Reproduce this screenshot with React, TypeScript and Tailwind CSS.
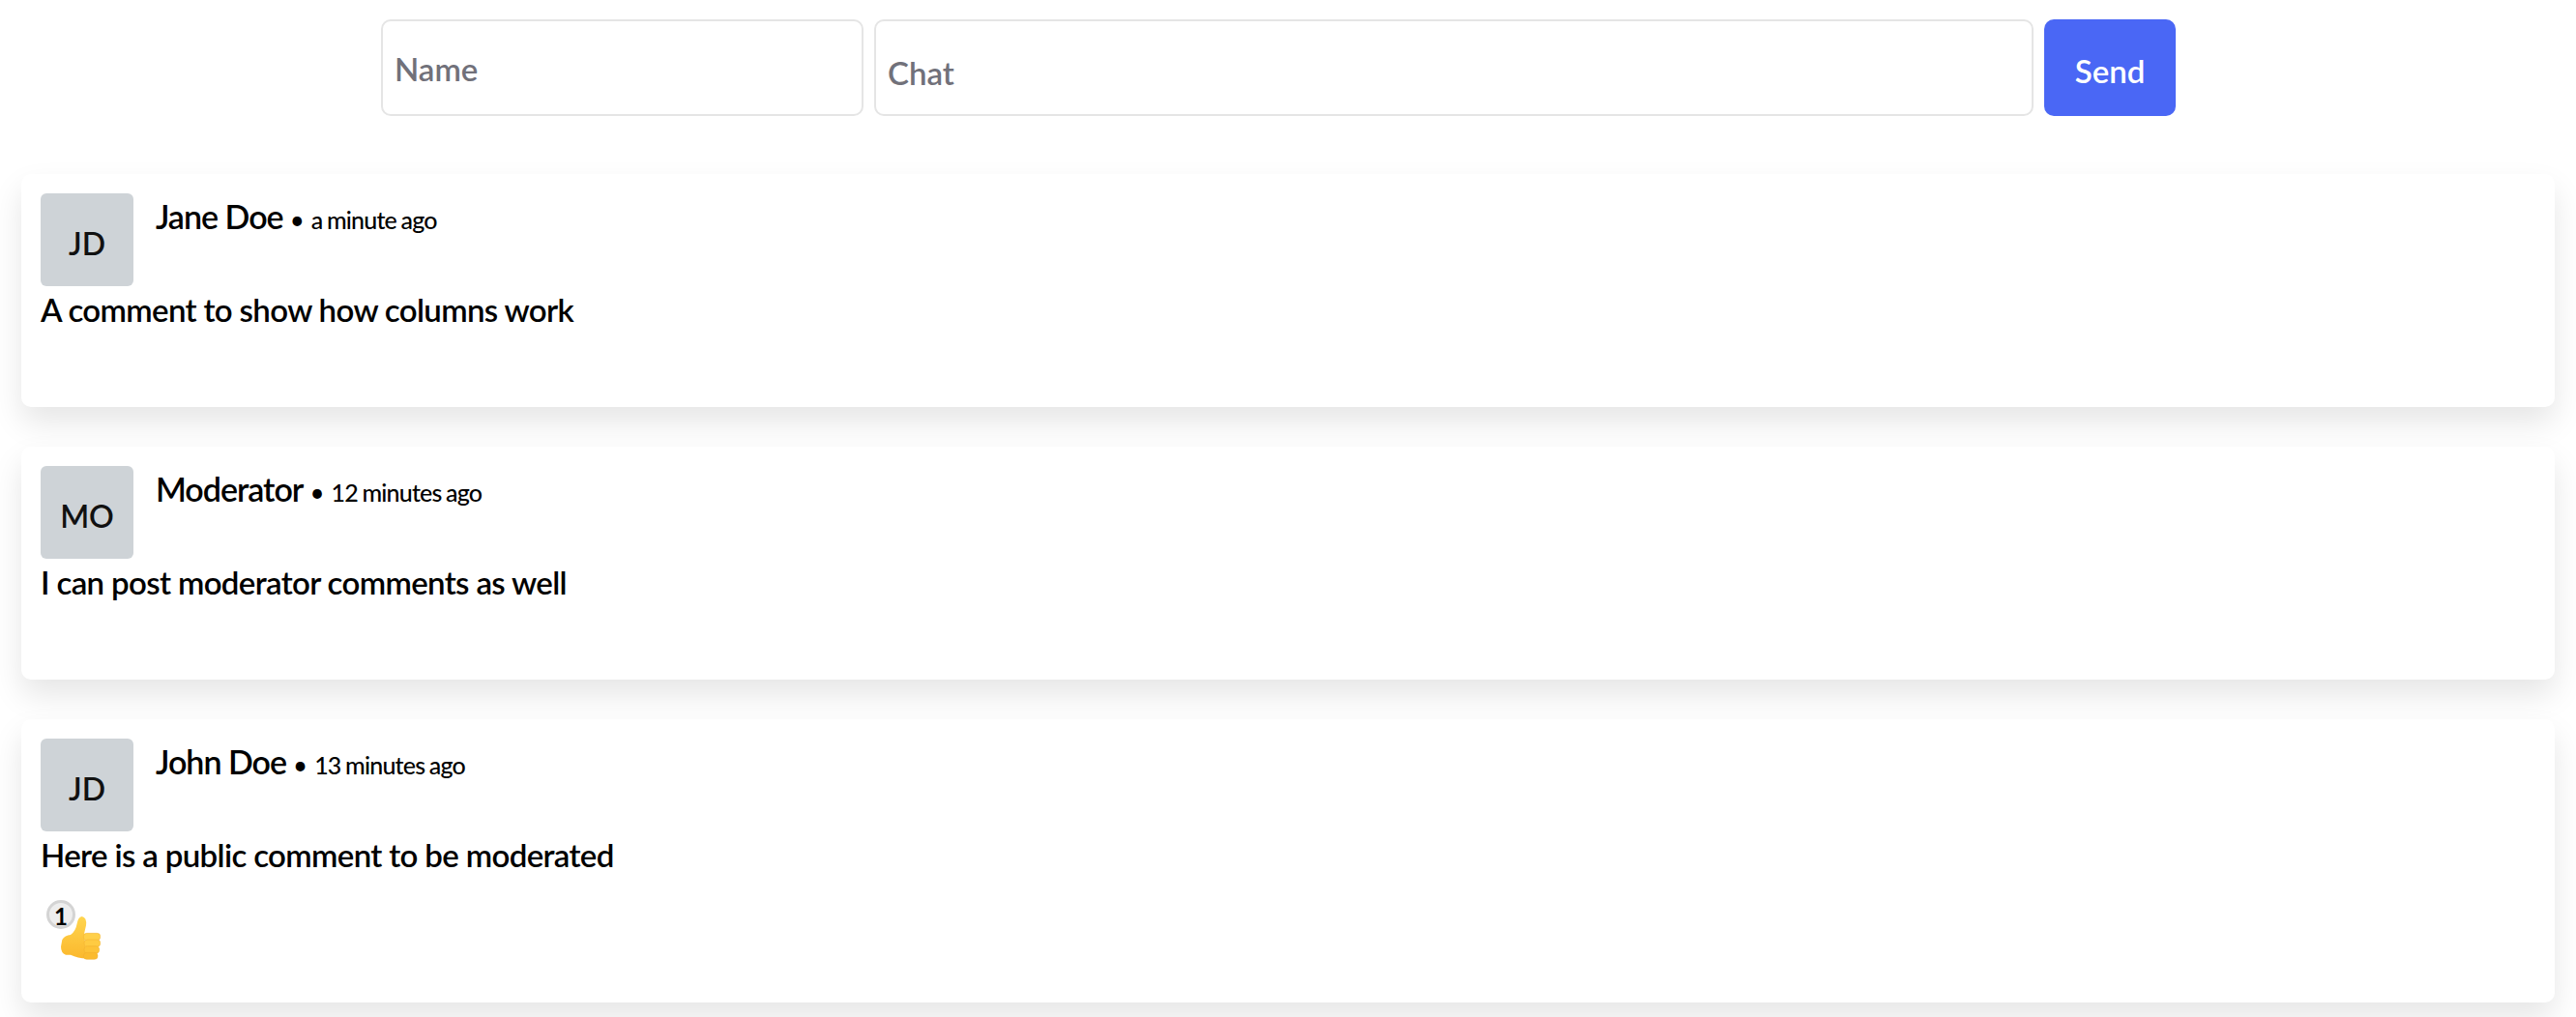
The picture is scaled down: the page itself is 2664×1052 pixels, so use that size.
const comments = [
  { initials: "JD", name: "Jane Doe", time: "a minute ago", body: "A comment to show how columns work" },
  { initials: "MO", name: "Moderator", time: "12 minutes ago", body: "I can post moderator comments as well" },
  { initials: "JD", name: "John Doe", time: "13 minutes ago", body: "Here is a public comment to be moderated", likes: 1 },
];

function ThumbsUp() {
  return (
    <svg viewBox="100 88 123 135" className="h-[45px] w-[41px]">
      <defs>
        <linearGradient id="thumb" x1="0" y1="0" x2="0" y2="1">
          <stop offset="0" stopColor="#FFD54F" />
          <stop offset="1" stopColor="#FBB82D" />
        </linearGradient>
      </defs>
      <path
        d="M104 160 Q112 146 130 145 Q146 134 150 110 Q153 90 165 88 Q181 91 178 116 L172 142 L180 218 Q152 218 130 207 L115 207 Q100 202 100 182 Z"
        fill="url(#thumb)"
      />
      <rect x="170" y="140" width="52" height="22" rx="10" fill="#FFD04A" stroke="#F0AE2E" strokeWidth="1.5" />
      <rect x="172" y="160" width="50" height="22" rx="10" fill="#FFCB42" stroke="#F0AE2E" strokeWidth="1.5" />
      <rect x="172" y="180" width="47" height="22" rx="10" fill="#FDC338" stroke="#F0AE2E" strokeWidth="1.5" />
      <rect x="170" y="200" width="44" height="21" rx="10" fill="#FBBB2F" stroke="#F0AE2E" strokeWidth="1.5" />
    </svg>
  );
}

function Comment({ initials, name, time, body, likes }: { initials: string; name: string; time: string; body: string; likes?: number }) {
  return (
    <div className="mb-[41px] rounded-[10px] bg-white p-5 shadow-[0_16px_32px_rgba(0,0,0,0.1)]">
      <div className="flex items-start">
        <div className="flex h-[96px] w-[96px] shrink-0 items-center justify-center rounded-md bg-[#ced3d7] pt-2 text-[32px] font-semibold text-[#111]">
          {initials}
        </div>
        <div className="ml-[23px] mt-[4px] flex items-baseline leading-[40px]">
          <span className="text-[34px] font-semibold tracking-[-1px] text-black">{name}</span>
          <span className="mx-[7px] text-[26px] text-black">•</span>
          <span className="text-[25px] font-medium tracking-[-0.8px] [word-spacing:-1px] text-black">{time}</span>
        </div>
      </div>
      <p className="mt-[1px] text-[33px] font-semibold leading-[46px] tracking-[-0.65px] text-black">{body}</p>
      {likes ? (
        <div className="relative mt-[24px] h-[86px] pl-[21px] pt-[17px]">
          <ThumbsUp />
          <span className="absolute left-[6px] top-0 flex h-[30px] w-[30px] items-center justify-center rounded-full border-[3px] border-[#d4d4d4] bg-[#eeeeee] pt-[3px] text-[24px] font-bold leading-none text-black">
            {likes}
          </span>
        </div>
      ) : (
        <div className="h-[58px]" />
      )}
    </div>
  );
}

export default function App() {
  return (
    <div className="min-h-[1052px] bg-white px-[22px] pt-5 font-['Lato','Liberation_Sans',sans-serif]">
      <form className="mb-[60px] flex justify-center gap-[11px] pr-[20px]">
        <input
          placeholder="Name"
          className="h-[100px] w-[499px] rounded-[10px] border-2 border-[#e5e5e5] pl-[12px] pt-[2px] text-[33px] font-semibold placeholder:text-[#71717a]"
        />
        <input
          placeholder="Chat"
          className="h-[100px] w-[1199px] rounded-[10px] border-2 border-[#e5e5e5] pl-[12px] pt-[10px] text-[33px] font-semibold placeholder:text-[#71717a]"
        />
        <button type="button" className="h-[100px] w-[136px] rounded-[10px] bg-[#4a67f5] pt-2 text-[33px] font-semibold text-white">
          Send
        </button>
      </form>
      {comments.map((c) => (
        <Comment key={c.name} {...c} />
      ))}
    </div>
  );
}
